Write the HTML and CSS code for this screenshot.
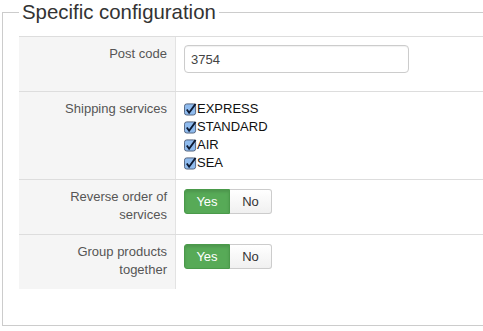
FILE: index.html
```html
<!DOCTYPE html>
<html lang="en">
<head>
    <meta charset="UTF-8">
    <title>Specific configuration</title>
    <link rel="stylesheet" href="styles.css">
</head>
<body>
    <fieldset class="config">
        <legend>Specific configuration</legend>
        <div class="form-table">
            <div class="row">
                <div class="label">Post code</div>
                <div class="field">
                    <input type="text" class="text-input" value="3754">
                </div>
            </div>
            <div class="row">
                <div class="label">Shipping services</div>
                <div class="field">
                    <label class="check"><span class="box"><svg width="14" height="14" viewBox="0 0 14 14"><rect x="0.5" y="1.5" width="12" height="12" rx="2.5" fill="#8fbbee" stroke="#4d5d78"/><path d="M3 7.5 L5.5 11 L12.5 1.5" fill="none" stroke="#0d1a33" stroke-width="2"/></svg></span>EXPRESS</label>
                    <label class="check"><span class="box"><svg width="14" height="14" viewBox="0 0 14 14"><rect x="0.5" y="1.5" width="12" height="12" rx="2.5" fill="#8fbbee" stroke="#4d5d78"/><path d="M3 7.5 L5.5 11 L12.5 1.5" fill="none" stroke="#0d1a33" stroke-width="2"/></svg></span>STANDARD</label>
                    <label class="check"><span class="box"><svg width="14" height="14" viewBox="0 0 14 14"><rect x="0.5" y="1.5" width="12" height="12" rx="2.5" fill="#8fbbee" stroke="#4d5d78"/><path d="M3 7.5 L5.5 11 L12.5 1.5" fill="none" stroke="#0d1a33" stroke-width="2"/></svg></span>AIR</label>
                    <label class="check"><span class="box"><svg width="14" height="14" viewBox="0 0 14 14"><rect x="0.5" y="1.5" width="12" height="12" rx="2.5" fill="#8fbbee" stroke="#4d5d78"/><path d="M3 7.5 L5.5 11 L12.5 1.5" fill="none" stroke="#0d1a33" stroke-width="2"/></svg></span>SEA</label>
                </div>
            </div>
            <div class="row">
                <div class="label">Reverse order of services</div>
                <div class="field">
                    <div class="btn-group">
                        <button class="btn active">Yes</button>
                        <button class="btn">No</button>
                    </div>
                </div>
            </div>
            <div class="row">
                <div class="label">Group products together</div>
                <div class="field">
                    <div class="btn-group">
                        <button class="btn active">Yes</button>
                        <button class="btn">No</button>
                    </div>
                </div>
            </div>
        </div>
    </fieldset>
</body>
</html>
```

FILE: styles.css
```css
html, body {
    margin: 0;
    padding: 0;
    overflow: hidden;
    background-color: #ffffff;
    font-family: "Liberation Sans", Arial, sans-serif;
    font-size: 13px;
    color: #333333;
}
/* the right edge of the box runs past the window */
.config {
    margin: 0 0 0 2px;
    padding: 12px 0 36px 16px;
    border: 1px solid #cccccc;
    border-right: 0;
}
.config legend {
    padding: 0 3px;
    font-size: 20.4px;
    line-height: 24px;
    color: #333333;
}
.row {
    display: grid;
    grid-template-columns: 157px 1fr;
    min-height: 55px;
    box-sizing: border-box;
    border-top: 1px solid #dddddd;
}
.label {
    background-color: #f5f5f5;
    border-right: 1px solid #e3e3e3;
    padding: 8px 8px 7px 8px;
    text-align: right;
    line-height: 18px;
    color: #555555;
}
.field {
    padding: 8px 8px 7px 8px;
    line-height: 18px;
}
.text-input {
    display: block;
    box-sizing: border-box;
    width: 225px;
    height: 28px;
    margin: 0;
    padding: 0 6px;
    border: 1px solid #cccccc;
    border-radius: 4px;
    box-shadow: inset 0 1px 1px rgba(0, 0, 0, 0.06);
    font-family: inherit;
    font-size: 13px;
    color: #444444;
}
.check {
    display: flex;
    align-items: center;
    height: 18px;
    color: #111111;
}
.box {
    display: inline-flex;
    width: 13px;
    height: 14px;
}
.btn-group {
    display: flex;
    margin-top: 1px;
}
.btn {
    height: 25px;
    margin: 0;
    padding: 0 10px;
    font-family: inherit;
    font-size: 13px;
    color: #333333;
    background: linear-gradient(#ffffff, #f0f0f0);
    border: 1px solid #cccccc;
    border-radius: 0 3px 3px 0;
}
.btn.active {
    width: 46px;
    color: #ffffff;
    background: #57aa57;
    border-color: #4a9a4a;
    border-radius: 3px 0 0 3px;
    box-shadow: inset 0 2px 3px rgba(0, 0, 0, 0.12);
}
.btn + .btn {
    width: 42px;
    border-left: 0;
}
```
